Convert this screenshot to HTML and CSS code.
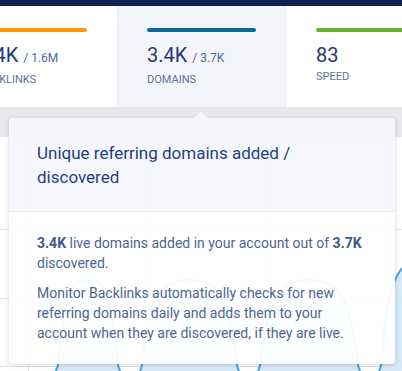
FILE: index.html
```html
<!DOCTYPE html>
<html lang="en">
   <head>
      <meta charset="UTF-8" />
      <meta name="viewport" content="width=device-width, initial-scale=1.0"/>
      <title>Domains</title>
      <link rel="stylesheet" href="styles.css">
   </head>
   <body>
      <div class="topbar"></div>
      <div class="stats">
         <div class="stat">
            <div class="bar orange"></div>
            <div class="value">1.4K <span class="total">/ 1.6M</span></div>
            <div class="label">BACKLINKS</div>
         </div>
         <div class="stat active">
            <div class="bar blue"></div>
            <div class="value">3.4K <span class="total">/ 3.7K</span></div>
            <div class="label">DOMAINS</div>
         </div>
         <div class="stat">
            <div class="bar green"></div>
            <div class="value">83</div>
            <div class="label">SPEED</div>
         </div>
      </div>
      <div class="main">
         <div class="band"></div>
         <div class="chart">
            <svg width="402" height="240" viewBox="0 0 402 240">
               <path class="area" d="M0 250 C 40 250, 54 245, 58 228 C 64 160, 70 143, 88 143 C 106 143, 112 160, 118 228 C 121 245, 139 245, 142 228 C 150 160, 160 143, 189 143 C 219 143, 229 160, 237 228 C 240 245, 257 245, 260 228 C 268 160, 278 143, 309 143 C 340 143, 350 160, 358 228 C 361 245, 378 245, 381 228 C 385 172, 390 146, 402 131 L 402 240 L 0 240 Z" />
               <g class="grid">
                  <line x1="0" y1="92.5" x2="402" y2="92.5" />
                  <line x1="0" y1="161.5" x2="402" y2="161.5" />
                  <line x1="0" y1="229.5" x2="402" y2="229.5" />
                  <line x1="28.5" y1="0" x2="28.5" y2="240" />
                  <line x1="148.5" y1="0" x2="148.5" y2="240" />
                  <line x1="268.5" y1="0" x2="268.5" y2="240" />
                  <line x1="388.5" y1="0" x2="388.5" y2="240" />
               </g>
               <path class="line" d="M0 250 C 40 250, 54 245, 58 228 C 64 160, 70 143, 88 143 C 106 143, 112 160, 118 228 C 121 245, 139 245, 142 228 C 150 160, 160 143, 189 143 C 219 143, 229 160, 237 228 C 240 245, 257 245, 260 228 C 268 160, 278 143, 309 143 C 340 143, 350 160, 358 228 C 361 245, 378 245, 381 228 C 385 172, 390 146, 402 131" />
            </svg>
         </div>
         <div class="tooltip">
            <div class="tooltip-head">Unique referring domains added / discovered</div>
            <div class="tooltip-body">
               <p><b>3.4K</b> live domains added in your account out of <b>3.7K</b> discovered.</p>
               <p>Monitor Backlinks automatically checks for new referring domains daily and adds them to your account when they are discovered, if they are live.</p>
            </div>
         </div>
      </div>
   </body>
</html>
```

FILE: styles.css
```css
body {
margin: 0;
padding: 0;
font-family: Roboto, "Liberation Sans", sans-serif;
background-color: white;
width: 402px;
height: 371px;
overflow: hidden;
}
.topbar {
height: 6px;
background-color: #0f2152;
}
.stats {
display: flex;
margin-left: -52px;
height: 101px;
background-color: white;
}
.stat {
flex: 0 0 169px;
box-sizing: border-box;
padding: 22px 29px 0 29px;
border-left: 1px solid transparent;
border-right: 1px solid transparent;
}
.stat.active {
background-color: #f4f5fb;
border-left-color: #e9ebf2;
border-right-color: #e9ebf2;
}
.bar {
height: 4px;
border-radius: 2px;
margin-bottom: 11px;
}
.bar.orange {
background-color: #ff9800;
}
.bar.blue {
background-color: #0f6797;
}
.bar.green {
background-color: #62b22f;
}
.value {
font-size: 20px;
line-height: 24px;
color: #1e3a78;
white-space: nowrap;
}
.total {
font-size: 12px;
color: #4d6898;
}
.label {
margin-top: 3px;
font-size: 11px;
line-height: 14px;
color: #56729f;
white-space: nowrap;
}
.main {
position: relative;
}
.band {
height: 30px;
background-color: #e7e8ed;
}
.chart svg {
display: block;
}
.grid line {
stroke: #e3e4e8;
stroke-width: 1;
}
.area {
fill: #d6e9f9;
}
.line {
fill: none;
stroke: #4aa2ea;
stroke-width: 2;
}
.tooltip {
position: absolute;
top: 11px;
left: 9px;
width: 386px;
border-radius: 4px;
box-shadow: 0 1px 5px rgba(0, 0, 0, 0.16);
}
.tooltip::before {
content: "";
position: absolute;
top: -6px;
left: 185px;
border-left: 7px solid transparent;
border-right: 7px solid transparent;
border-bottom: 6px solid #f5f7fc;
}
.tooltip-head {
background-color: rgba(245, 247, 252, 0.95);
border-radius: 4px 4px 0 0;
border-bottom: 1px solid #e8ebf2;
padding: 23px 28px 22px 28px;
font-size: 17px;
line-height: 24px;
color: #233f85;
}
.tooltip-body {
background-color: rgba(255, 255, 255, 0.94);
border-radius: 0 0 4px 4px;
padding: 21px 28px 21px 28px;
font-size: 14px;
line-height: 20px;
color: #4c6692;
}
.tooltip-body p {
margin: 0 0 10px 0;
}
.tooltip-body p:last-child {
margin-bottom: 0;
}
.tooltip-body b {
color: #3c5a8c;
}
```
